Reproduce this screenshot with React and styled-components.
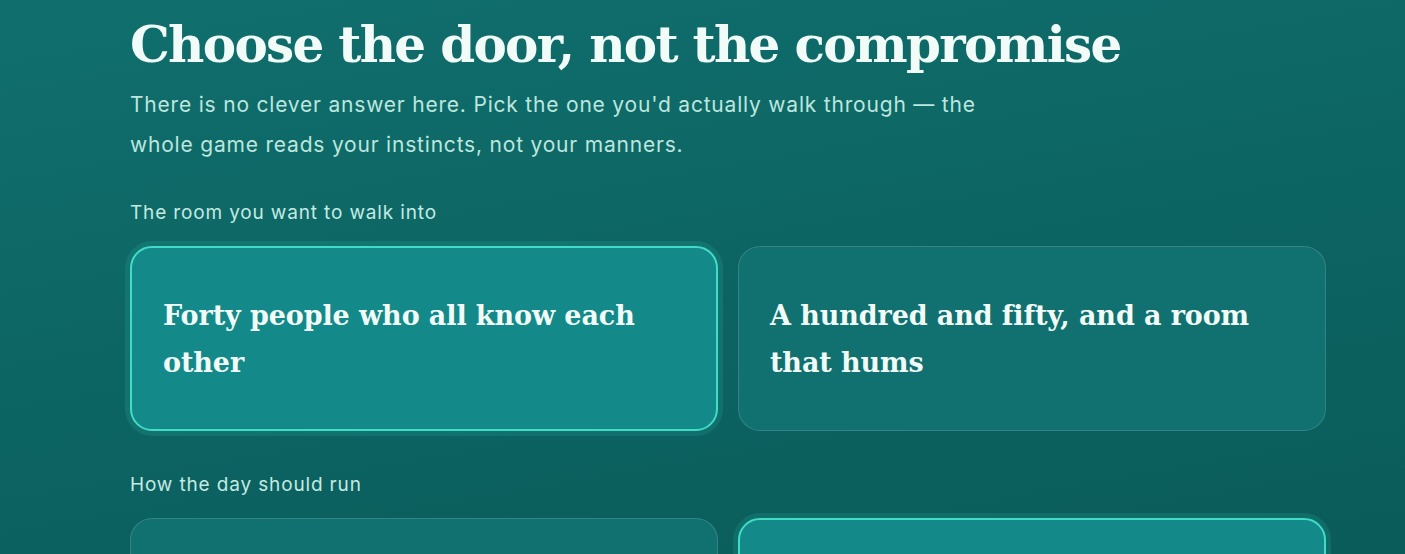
import React from "react";
import styled, { createGlobalStyle } from "styled-components";

const Global = createGlobalStyle`
  html, body { margin: 0; padding: 0; }
  body {
    background: linear-gradient(170deg, #106f6d 0%, #0c6462 45%, #095856 100%);
    min-height: 100vh;
    font-family: "Inter", "Noto Sans", sans-serif;
    overflow: hidden;
  }
`;

const Page = styled.main`
  width: 1196px;
  margin: 0 auto 0 130px;
  padding-top: 14px;
  display: flex;
  flex-direction: column;
`;

const Title = styled.h1`
  margin: 0;
  font-family: "DejaVu Serif", "Liberation Serif", serif;
  font-weight: 700;
  font-size: 50px;
  line-height: 62px;
  letter-spacing: -1.7px;
  color: #f1fbf8;
`;

const Lead = styled.p`
  margin: 9px 0 0;
  max-width: 880px;
  font-size: 21px;
  line-height: 40px;
  letter-spacing: 0.8px;
  color: #bde6de;
`;

const Section = styled.section`
  display: flex;
  flex-direction: column;
  margin-top: ${(p) => p.$top}px;
`;

const Label = styled.div`
  font-size: 19px;
  line-height: 24px;
  letter-spacing: 0.85px;
  color: #c4eae2;
  margin-bottom: 21px;
`;

const Options = styled.div`
  display: grid;
  grid-template-columns: 1fr 1fr;
  gap: 20px;
`;

const Card = styled.button`
  height: 185px;
  box-sizing: border-box;
  border-radius: 22px;
  padding: 0 31px;
  display: flex;
  align-items: center;
  text-align: left;
  cursor: pointer;
  font-family: "DejaVu Serif", "Liberation Serif", serif;
  font-weight: 700;
  font-size: 27px;
  line-height: 47px;
  letter-spacing: -0.1px;
  color: #f1fbf8;
  background: ${(p) => (p.$selected ? "#13898a" : "#117170")};
  border: ${(p) =>
    p.$selected ? "2px solid #42dcc5" : "1px solid rgba(255,255,255,0.14)"};
  box-shadow: ${(p) =>
    p.$selected ? "0 0 0 5px rgba(40, 170, 160, 0.22)" : "none"};
`;

const CardText = styled.span`
  display: block;
`;

export default function App() {
  return (
    <>
      <Global />
      <Page>
        <Title>Choose the door, not the compromise</Title>
        <Lead>
          There is no clever answer here. Pick the one you'd actually walk
          through — the whole game reads your instincts, not your manners.
        </Lead>
        <Section $top={36}>
          <Label>The room you want to walk into</Label>
          <Options>
            <Card $selected>
              <CardText>Forty people who all know each other</CardText>
            </Card>
            <Card>
              <CardText>A hundred and fifty, and a room that hums</CardText>
            </Card>
          </Options>
        </Section>
        <Section $top={42}>
          <Label>How the day should run</Label>
          <Options>
            <Card>
              <CardText>Everything planned to the minute</CardText>
            </Card>
            <Card $selected>
              <CardText>Loose, and let it find its shape</CardText>
            </Card>
          </Options>
        </Section>
      </Page>
    </>
  );
}
